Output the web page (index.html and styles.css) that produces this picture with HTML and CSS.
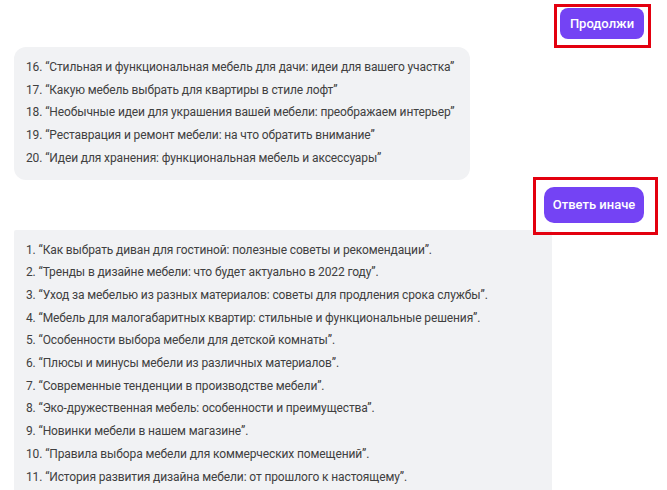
FILE: index.html
```html
<!DOCTYPE html>
<html lang="ru">
<head>
<meta charset="UTF-8">
<meta name="viewport" content="width=device-width, initial-scale=1.0">
<title>Чат</title>
<link rel="stylesheet" href="styles.css">
</head>
<body>

<div class="chat">
  <div class="user-row">
    <div class="marked marked-first">
      <button class="action action-small">Продолжи</button>
    </div>
  </div>

  <div class="bubble bubble-first">
    <p>16. “Стильная и функциональная мебель для дачи: идеи для вашего участка”</p>
    <p>17. “Какую мебель выбрать для квартиры в стиле лофт”</p>
    <p>18. “Необычные идеи для украшения вашей мебели: преображаем интерьер”</p>
    <p>19. “Реставрация и ремонт мебели: на что обратить внимание”</p>
    <p>20. “Идеи для хранения: функциональная мебель и аксессуары”</p>
  </div>

  <div class="user-row">
    <div class="marked marked-second">
      <button class="action">Ответь иначе</button>
    </div>
  </div>

  <div class="bubble bubble-second">
    <p>1. “Как выбрать диван для гостиной: полезные советы и рекомендации”.</p>
    <p>2. “Тренды в дизайне мебели: что будет актуально в 2022 году”.</p>
    <p>3. “Уход за мебелью из разных материалов: советы для продления срока службы”.</p>
    <p>4. “Мебель для малогабаритных квартир: стильные и функциональные решения”.</p>
    <p>5. “Особенности выбора мебели для детской комнаты”.</p>
    <p>6. “Плюсы и минусы мебели из различных материалов”.</p>
    <p>7. “Современные тенденции в производстве мебели”.</p>
    <p>8. “Эко-дружественная мебель: особенности и преимущества”.</p>
    <p>9. “Новинки мебели в нашем магазине”.</p>
    <p>10. “Правила выбора мебели для коммерческих помещений”.</p>
    <p>11. “История развития дизайна мебели: от прошлого к настоящему”.</p>
  </div>
</div>

</body>
</html>
```

FILE: styles.css
```css
body {
  font-family: Roboto, "Noto Sans", Arial, sans-serif;
  background-color: #fff;
  color: #333;
  margin: 0;
  padding: 0;
  height: 490px;
  overflow: hidden;
}

.chat {
  display: flex;
  flex-direction: column;
  padding: 8px 23px 0 14px;
}

.user-row {
  display: flex;
  justify-content: flex-end;
}

/* red annotation frame drawn over the button */
.marked {
  position: relative;
  display: flex;
}

.marked::after {
  content: "";
  position: absolute;
  border: 3px solid #e3000f;
  pointer-events: none;
}

.marked-first::after {
  left: -6px;
  right: -7px;
  top: -4px;
  bottom: -9px;
}

.marked-second::after {
  left: -11px;
  right: -14px;
  top: -10px;
  bottom: -12px;
}

.action {
  font-family: inherit;
  font-size: 13px;
  font-weight: 500;
  color: #fff;
  background-color: #7443f4;
  border: none;
  border-radius: 10px;
  width: 100px;
  height: 36px;
  padding: 0;
  cursor: pointer;
}

.action-small {
  width: 84px;
  height: 31px;
  border-radius: 8px;
}

.bubble {
  background-color: #f1f2f4;
  font-size: 12px;
  letter-spacing: -0.12px;
  line-height: 22.7px;
  color: #404040;
}

.bubble p {
  margin: 0;
  white-space: nowrap;
}

.bubble-first {
  align-self: flex-start;
  width: 432px;
  margin: 8px 0 7px;
  padding: 9px 12px 10px;
  border-radius: 12px;
}

.bubble-second {
  align-self: flex-start;
  width: 514px;
  margin-top: 7px;
  padding: 9px 12px 10px;
  border-radius: 2px;
}
```
